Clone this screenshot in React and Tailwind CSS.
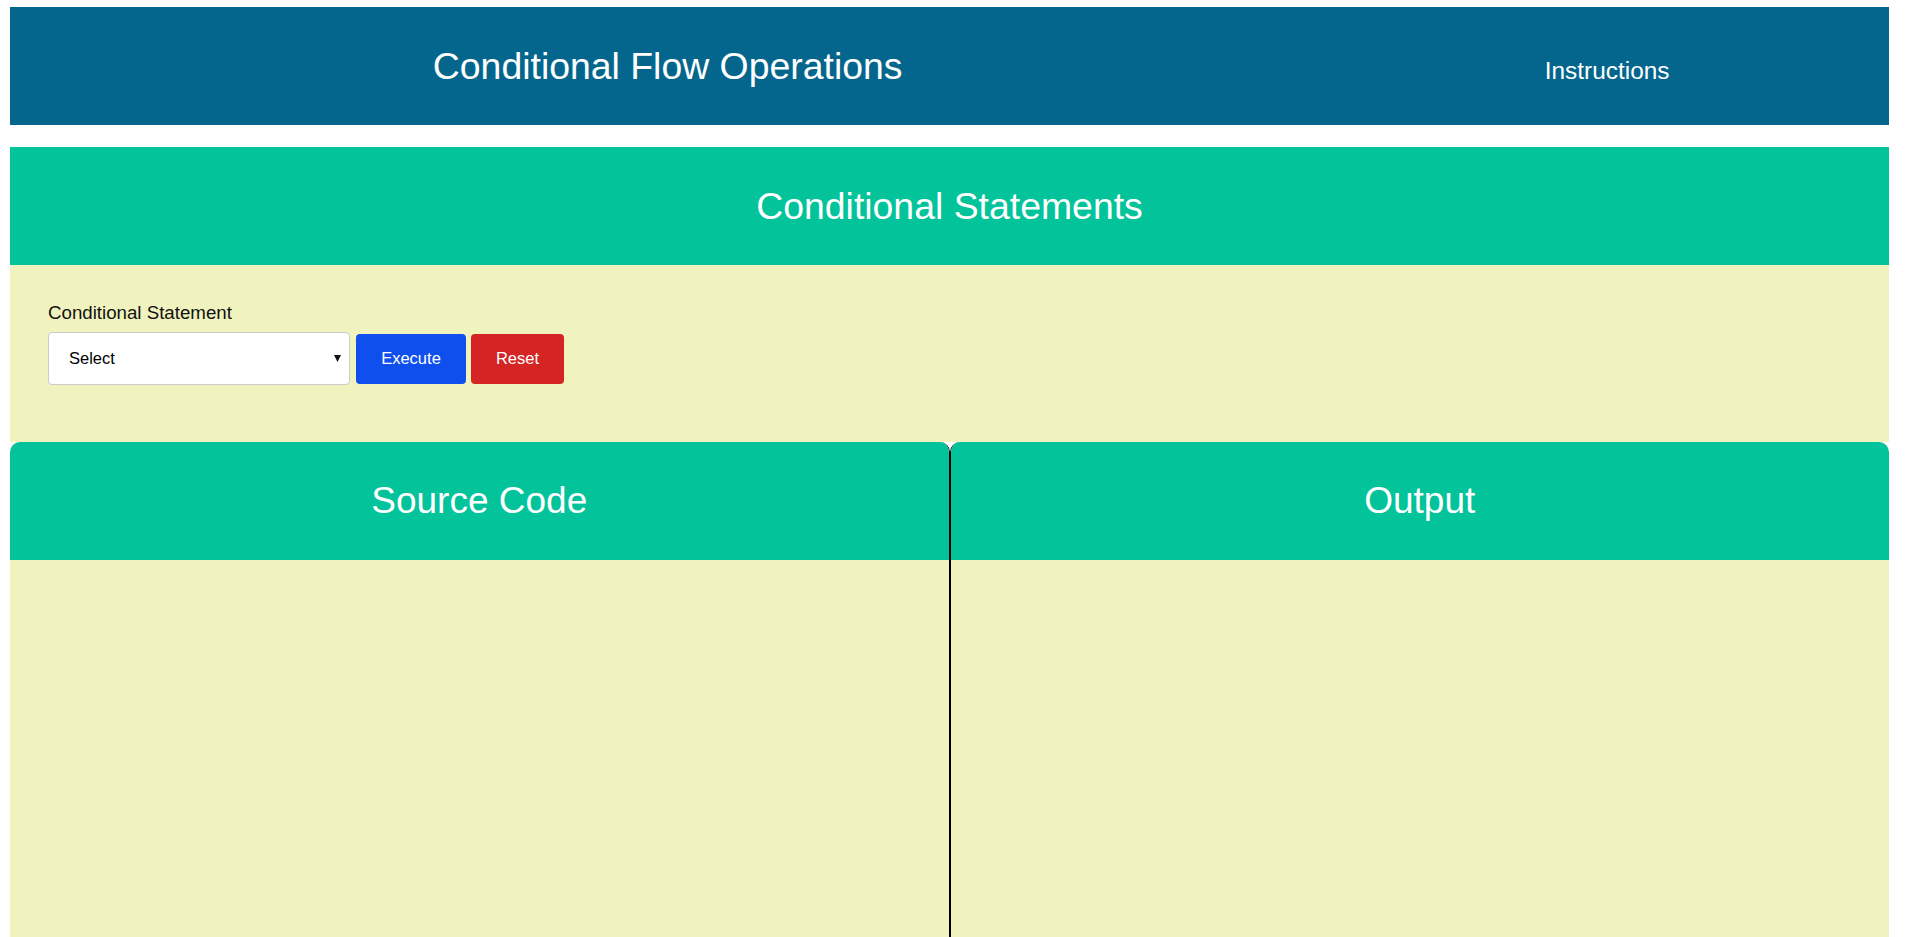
import React, { useState } from 'react';

// Palette: header #05668D, band #02C39A, panels #F0F3BD
const App = () => {
  const [choice, setChoice] = useState('');

  return (
    <div className="min-h-screen bg-white pl-[10px] pr-[31px] pt-[7px] pb-[8px] font-['Liberation_Sans',Arial,sans-serif]">
      {/* Top bar */}
      <header className="h-[118px] bg-[#05668D] text-white flex items-center">
        <div className="w-[70%] text-center text-[37.4px] leading-[42px]">Conditional Flow Operations</div>
        <div className="w-[30%] text-center text-[24.4px] leading-[28px] pt-[10px] cursor-pointer">Instructions</div>
      </header>

      {/* Section title */}
      <div className="mt-[22px] h-[118px] bg-[#02C39A] flex items-center justify-center">
        <h1 className="text-white text-[37.4px] leading-[42px]">Conditional Statements</h1>
      </div>

      {/* Controls */}
      <div className="bg-[#F0F3BD] h-[177px] pl-[38px] pt-[37px]">
        <label className="block text-[18.7px] leading-[22px] text-[#111]">Conditional Statement</label>
        <div className="mt-[8px] flex items-center">
          <div className="relative">
            <select
              value={choice}
              onChange={(e) => setChoice(e.target.value)}
              className="appearance-none w-[302px] h-[53px] bg-white border border-[#ccc] rounded-[4px] pl-[20px] text-[16.5px] text-black outline-none"
            >
              <option value="">Select</option>
              <option value="if">if</option>
              <option value="ifelse">if else</option>
              <option value="elif">if elif else</option>
              <option value="nested">nested if</option>
            </select>
            <svg className="absolute right-[9px] top-[23px] pointer-events-none" width="7" height="7" viewBox="0 0 7 7">
              <polygon points="0,0 7,0 3.5,7" fill="#111" />
            </svg>
          </div>
          <button className="ml-[6px] w-[110px] h-[50px] bg-[#0e4fee] text-white text-[16.5px] rounded-[4px]">
            Execute
          </button>
          <button className="ml-[5px] w-[93px] h-[50px] bg-[#d42424] text-white text-[16.5px] rounded-[4px]">
            Reset
          </button>
        </div>
      </div>

      {/* Code / output panels */}
      <div className="grid grid-cols-2">
        <div className="rounded-t-[10px] overflow-hidden border-r border-black">
          <div className="h-[118px] bg-[#02C39A] flex items-center justify-center">
            <h2 className="text-white text-[37px] leading-[42px]">Source Code</h2>
          </div>
          <div className="h-[672px] bg-[#F0F3BD]"></div>
        </div>
        <div className="rounded-t-[10px] overflow-hidden border-l border-black">
          <div className="h-[118px] bg-[#02C39A] flex items-center justify-center">
            <h2 className="text-white text-[37px] leading-[42px]">Output</h2>
          </div>
          <div className="h-[672px] bg-[#F0F3BD]"></div>
        </div>
      </div>
    </div>
  );
};

export default App;
